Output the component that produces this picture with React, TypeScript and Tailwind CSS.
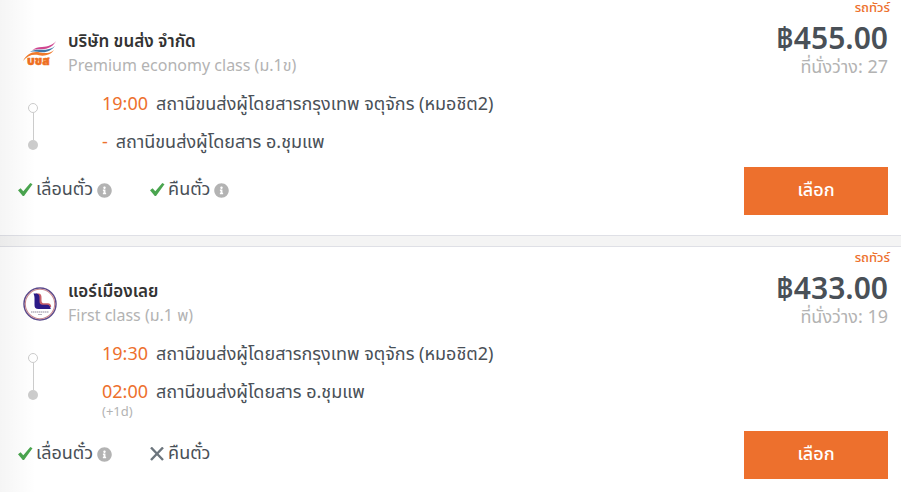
import { FaInfoCircle } from 'react-icons/fa';

type Trip = {
  id: string;
  company: string;
  logo: 'transport' | 'airmuangloei';
  seatClass: string;
  price: string;
  seats: number;
  departTime: string;
  departStation: string;
  arriveTime: string;
  arriveStation: string;
  arriveNote?: string;
  canRefund: boolean;
};

const trips: Trip[] = [
  {
    id: 'transport-1900',
    company: 'บริษัท ขนส่ง จำกัด',
    logo: 'transport',
    seatClass: 'Premium economy class (ม.1ข)',
    price: '฿455.00',
    seats: 27,
    departTime: '19:00',
    departStation: 'สถานีขนส่งผู้โดยสารกรุงเทพ จตุจักร (หมอชิต2)',
    arriveTime: '-',
    arriveStation: 'สถานีขนส่งผู้โดยสาร อ.ชุมแพ',
    canRefund: true
  },
  {
    id: 'airmuangloei-1930',
    company: 'แอร์เมืองเลย',
    logo: 'airmuangloei',
    seatClass: 'First class (ม.1 พ)',
    price: '฿433.00',
    seats: 19,
    departTime: '19:30',
    departStation: 'สถานีขนส่งผู้โดยสารกรุงเทพ จตุจักร (หมอชิต2)',
    arriveTime: '02:00',
    arriveStation: 'สถานีขนส่งผู้โดยสาร อ.ชุมแพ',
    arriveNote: '(+1d)',
    canRefund: false
  }
];

function TransportLogo() {
  return (
    <svg viewBox="0 0 34 34" className="size-[34px]" aria-hidden="true">
      <path d="M33 4C30 8 25 9.500 19 10C15 10.300 12 11 9.500 13C13 12 17 12.300 21 12C27 11.500 31 8 33 4Z" fill="#d0458f" />
      <path d="M32 9C28 12.500 23 13 17 12.800C13 12.700 10 13 7 15C11 14.200 14 14.800 18 15.200C24 15.800 29 13 32 9Z" fill="#3f77a8" />
      <path d="M31 13C27 16.500 22 16.500 17 15.500C10 14 4 16.500 0 24C4.500 18.500 10 17 16 18.300C22 19.500 28 17.500 31 13Z" fill="#f07a2b" />
      <text x="4" y="28" fontSize="12" fontWeight="900" fill="#ee6f21" stroke="#ee6f21" strokeWidth="0.5">
        บขส
      </text>
    </svg>
  );
}

function AirMuangLoeiLogo() {
  return (
    <svg viewBox="0 0 34 34" className="size-[34px]" aria-hidden="true">
      <circle cx="17" cy="17" r="16" fill="#fff" stroke="#5a4a8c" strokeWidth="1.500" />
      <circle cx="17" cy="17" r="14.700" fill="none" stroke="#c98a90" strokeWidth="1.100" />
      <path d="M13 6.500H16C18 7 18.500 8.500 18.500 11V13.500C18.500 15.500 19.500 16.300 21.500 16.300H25C27 16.300 28 17.500 28.200 20H24L18 18.500C16 18 15.500 17 15.500 15Z" fill="#c8606a" />
      <path d="M10.500 6.500H13.500C16 7 16.500 8.500 16.500 11V14.500C16.500 16.800 17.500 17.800 19.500 17.800H24C26.300 17.800 27.300 19.500 27.800 22H15.500C12.500 22 11.500 20.500 11.500 18V11C11.500 9 11 8 10.500 6.500Z" fill="#2c1a87" />
      <path d="M8 25H26" stroke="#8f8a9c" strokeWidth="1.200" strokeDasharray="1.500 0.500" />
      <path d="M15 27.500H19" stroke="#b5b1be" strokeWidth="1" />
    </svg>
  );
}

function CheckIcon() {
  return (
    <svg viewBox="0 0 14 14" className="size-[14px] overflow-visible text-[#4aa54f]" aria-hidden="true">
      <path d="M0 7.200L2.600 5.200L5.300 8.300L12.300 0L14.500 1.300L6 13H4.800Z" fill="currentColor" />
    </svg>
  );
}

function CrossIcon() {
  return (
    <svg viewBox="0 0 14 14" className="size-[14px] text-[#6c757d]" aria-hidden="true">
      <path d="M1 0.500L13 13M13 0.500L1 13" stroke="currentColor" strokeWidth="2.400" />
    </svg>
  );
}

function Policy({ label, allowed }: { label: string; allowed: boolean }) {
  return (
    <li className="flex items-center gap-1">
      {allowed ? <CheckIcon /> : <CrossIcon />}
      <span>{label}</span>
      {allowed && <FaInfoCircle className="size-[15px] text-[#b3b3b3]" />}
    </li>
  );
}

function TripCard({ trip }: { trip: Trip }) {
  return (
    <article className="border-y border-[#dfe0e6] bg-white pt-[3px] pb-5 first:border-t-0 first:pt-0">
      <header className="flex justify-between pr-[13px] pl-[23px]">
        <div className="flex items-start gap-[11px] pt-[30px]">
          <div className="pt-[7px]">{trip.logo === 'transport' ? <TransportLogo /> : <AirMuangLoeiLogo />}</div>
          <div>
            <h2 className="text-[17px] leading-6 font-semibold text-[#333]">{trip.company}</h2>
            <p className="text-[16px] leading-6 text-[#b3b3b3]">{trip.seatClass}</p>
          </div>
        </div>
        <div className="text-right">
          <p className="-mr-[2px] text-[13px] leading-4 font-medium text-[#ed702d]">รถทัวร์</p>
          <p className="pt-[6px] text-[30px] leading-9 font-semibold text-[#495057]">{trip.price}</p>
          <p className="text-[18px] leading-5 text-[#b3b3b3]">ที่นั่งว่าง: {trip.seats}</p>
        </div>
      </header>

      <div className="flex gap-16 pt-[15px] pl-[28px] text-[18px] leading-6 text-[#495057]">
        <div className="flex h-[57px] flex-col items-center pt-[10px]">
          <span className="size-[10px] shrink-0 rounded-full border border-[#ccc] bg-white" />
          <span className="w-px grow bg-[#ccc]" />
          <span className="size-[10px] shrink-0 rounded-full bg-[#ccc]" />
        </div>
        <div>
          <div className="flex gap-2">
            <span className="text-[#ed702d]">{trip.departTime}</span>
            <span>{trip.departStation}</span>
          </div>
          <div className="flex gap-2 pt-[14px]">
            <span className="text-[#ed702d]">{trip.arriveTime}</span>
            <span>{trip.arriveStation}</span>
          </div>
          {trip.arriveNote && <p className="text-[13px] leading-[14px] text-[#b3b3b3]">{trip.arriveNote}</p>}
        </div>
      </div>

      <footer className="flex items-center justify-between pt-3 pr-[13px] pl-[18px]">
        <ul className="flex gap-[38px] pb-[2px] text-[18px] leading-6 text-[#495057]">
          <Policy label="เลื่อนตั๋ว" allowed />
          <Policy label="คืนตั๋ว" allowed={trip.canRefund} />
        </ul>
        <button type="button" className="h-12 w-36 bg-[#ed702d] pb-[2px] text-[18px] font-medium text-white">
          เลือก
        </button>
      </footer>
    </article>
  );
}

export default function App() {
  return (
    <main className="relative min-h-screen bg-white font-['Noto_Sans_Thai','Noto_Sans',sans-serif]">
      <div className="flex flex-col gap-[10px] bg-[#f4f4f4]">
        {trips.map((trip) => (
          <TripCard key={trip.id} trip={trip} />
        ))}
      </div>
      <div className="pointer-events-none absolute inset-y-0 left-0 w-9 bg-gradient-to-r from-black/4 to-transparent" />
    </main>
  );
}
